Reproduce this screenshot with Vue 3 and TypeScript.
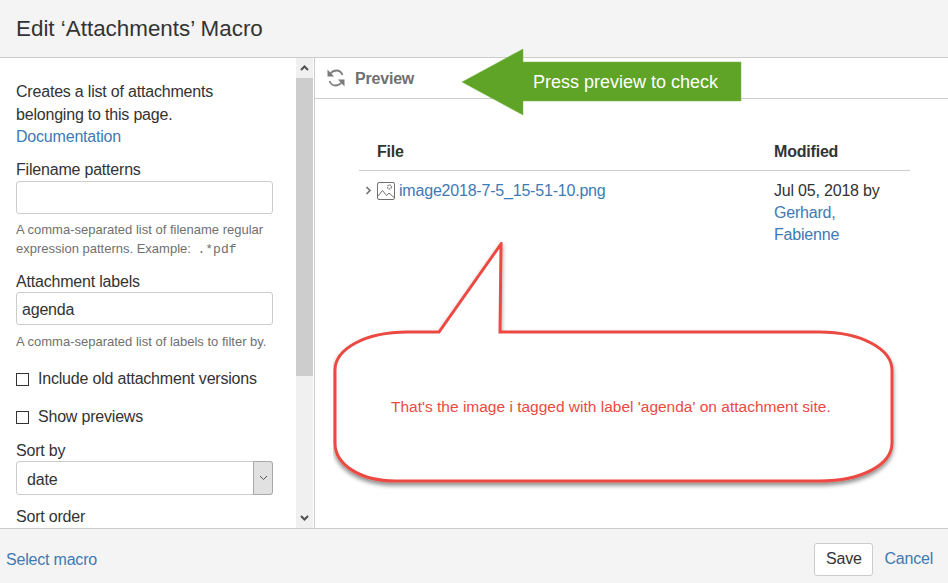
<template>
  <div class="dialog">
    <header class="dialog-header">
      <h2>Edit ‘Attachments’ Macro</h2>
    </header>

    <div class="dialog-body">
      <aside class="sidebar">
        <div class="form">
          <p class="intro">
            Creates a list of attachments belonging to this page.
            <a class="link" href="#">Documentation</a>
          </p>

          <label class="field-label first">Filename patterns</label>
          <div class="text-input"></div>
          <p class="hint">
            A comma-separated list of filename regular expression patterns. Example:
            <code>.*pdf</code>
          </p>

          <label class="field-label second">Attachment labels</label>
          <div class="text-input">agenda</div>
          <p class="hint low">A comma-separated list of labels to filter by.</p>

          <div v-for="option in checkboxes" :key="option" class="check-row">
            <span class="checkbox"></span>
            <span>{{ option }}</span>
          </div>

          <label class="field-label sort">Sort by</label>
          <div class="select">
            <span class="select-value">date</span>
            <span class="select-btn">
              <svg width="9" height="6" viewBox="0 0 9 6">
                <path d="M1 1l3.5 3.5L8 1" fill="none" stroke="#555" stroke-width="1" />
              </svg>
            </span>
          </div>

          <label class="field-label order">Sort order</label>
        </div>

        <div class="scrollbar">
          <span class="scroll-btn">
            <svg width="9" height="6" viewBox="0 0 9 6">
              <path d="M1 5l3.5-3.5L8 5" fill="none" stroke="#505050" stroke-width="2" />
            </svg>
          </span>
          <div class="scroll-thumb"></div>
          <span class="scroll-btn bottom">
            <svg width="9" height="6" viewBox="0 0 9 6">
              <path d="M1 1l3.5 3.5L8 1" fill="none" stroke="#505050" stroke-width="2" />
            </svg>
          </span>
        </div>
      </aside>

      <main class="preview">
        <div class="preview-bar">
          <svg class="refresh" width="18" height="18" viewBox="0 0 18 18">
            <path d="M0.500 0.500V7.500H7z" fill="#7a7a7a" />
            <path d="M3.500 4.500C5 2.500 7 1.500 9.500 1.500C12.500 1.500 14.500 3.500 15.500 6" fill="none" stroke="#808080" stroke-width="1.800" />
            <path d="M17.500 17.500V10.500H11z" fill="#7a7a7a" />
            <path d="M14.500 13.500C13 15.500 11 16.500 8.500 16.500C5.500 16.500 3.500 14.500 2.500 12" fill="none" stroke="#808080" stroke-width="1.800" />
          </svg>
          <span class="preview-title">Preview</span>
        </div>

        <table class="files">
          <thead>
            <tr>
              <th class="col-file">File</th>
              <th class="col-modified">Modified</th>
            </tr>
          </thead>
          <tbody>
            <tr>
              <td class="col-file">
                <div class="file-cell">
                  <svg class="twisty" width="7" height="9" viewBox="0 0 7 9">
                    <path d="M1.500 1l3.500 3.500L1.500 8" fill="none" stroke="#707070" stroke-width="1.600" />
                  </svg>
                  <svg class="file-icon" width="18" height="18" viewBox="0 0 18 18">
                    <rect x="0.500" y="0.500" width="17" height="17" rx="1.500" fill="#fff" stroke="#707070" />
                    <path d="M1 14l4.500-5.500 4 5 2.500-2.500 5 4.500" fill="none" stroke="#707070" />
                    <circle cx="12.500" cy="5" r="2" fill="none" stroke="#8a8a8a" stroke-width="1.400" stroke-dasharray="1.500 0.600" />
                  </svg>
                  <a class="link" href="#">{{ fileName }}</a>
                </div>
              </td>
              <td class="col-modified">
                Jul 05, 2018 by
                <a class="link block" href="#">Gerhard,</a>
                <a class="link block" href="#">Fabienne</a>
              </td>
            </tr>
          </tbody>
        </table>
      </main>
    </div>

    <footer class="dialog-footer">
      <a class="link" href="#">Select macro</a>
      <div class="actions">
        <button class="save" type="button">Save</button>
        <a class="link" href="#">Cancel</a>
      </div>
    </footer>

    <!-- annotations drawn on top of the screenshot -->
    <div class="note-arrow">
      <svg width="281" height="68" viewBox="0 0 281 68">
        <path d="M1 34L62 1V14H280V53H62V67z" fill="#5fa327" stroke="#7cb64c" stroke-width="0.500" />
      </svg>
      <span class="note-arrow-text">Press preview to check</span>
    </div>

    <div class="note-bubble">
      <svg width="570" height="250" viewBox="0 0 570 250">
        <defs>
          <filter id="bubble-shadow" x="-5%" y="-5%" width="110%" height="115%">
            <feDropShadow dx="0" dy="3" stdDeviation="2" flood-color="#000" flood-opacity="0.45" />
          </filter>
        </defs>
        <path
          d="M75 90H106L168 2L167 90H486C530 90 559 108 559 128V201C559 222 530 239 486 239H63C26 239 2 222 2 201V128C2 108 30 90 75 90Z"
          fill="#fff"
          stroke="#ec4a43"
          stroke-width="3"
          filter="url(#bubble-shadow)"
        />
      </svg>
      <span class="note-bubble-text">That's the image i tagged with label 'agenda' on attachment site.</span>
    </div>
  </div>
</template>

<script setup lang="ts">
const fileName = 'image2018-7-5_15-51-10.png'
const checkboxes: string[] = ['Include old attachment versions', 'Show previews']
</script>

<style scoped>
.dialog {
  position: relative;
  display: flex;
  flex-direction: column;
  width: 948px;
  height: 583px;
  overflow: hidden;
  background: #fff;
  color: #333;
  font-family: "Liberation Sans", Arial, sans-serif;
  font-size: 16px;
  letter-spacing: -0.200px;
  line-height: 20px;
}

.dialog-header {
  flex: none;
  height: 57px;
  padding: 0 16px;
  display: flex;
  align-items: center;
  background: #f4f4f4;
  border-bottom: 1px solid #ccc;
}

.dialog-header h2 {
  margin: 0;
  font-size: 22.400px;
  font-weight: 400;
  letter-spacing: 0;
  line-height: 28px;
}

.dialog-body {
  flex: 1;
  min-height: 0;
  display: flex;
}

.sidebar {
  flex: none;
  width: 315px;
  display: flex;
  border-right: 1px solid #ccc;
  box-sizing: border-box;
}

.form {
  flex: none;
  width: 296px;
  box-sizing: border-box;
  padding: 23px 23px 0 16px;
  overflow: hidden;
}

.intro {
  margin: 0;
  line-height: 22.500px;
}

.link {
  color: #4079b3;
  text-decoration: none;
}

.intro .link {
  display: block;
}

.field-label {
  display: block;
  line-height: 20px;
}

.field-label.first {
  margin-top: 11.500px;
  margin-bottom: 1px;
}

.field-label.second {
  margin-top: 13px;
  margin-bottom: 0;
}

.field-label.sort {
  margin-top: 14px;
  margin-bottom: 0;
}

.field-label.order {
  margin-top: 12px;
}

.text-input {
  box-sizing: border-box;
  width: 257px;
  height: 33px;
  padding: 0 5px;
  line-height: 33px;
  background: #fff;
  border: 1px solid #ccc;
  border-radius: 3px;
}

.hint {
  margin: 6px 0 0;
  color: #707070;
  font-size: 13px;
  letter-spacing: 0;
  line-height: 19px;
}

.hint.low {
  margin-top: 7px;
}

.hint code {
  margin-left: 3px;
  font-family: "Liberation Mono", monospace;
  font-size: 13px;
}

.check-row {
  display: flex;
  align-items: center;
  gap: 9px;
  height: 20px;
}

.hint + .check-row {
  margin-top: 18px;
}

.check-row + .check-row {
  margin-top: 18px;
}

.checkbox {
  flex: none;
  box-sizing: border-box;
  width: 13px;
  height: 13px;
  border: 1px solid #333;
}

.select {
  box-sizing: border-box;
  display: flex;
  width: 257px;
  height: 34px;
  background: #fff;
  border: 1px solid #ccc;
  border-radius: 3px;
}

.select-value {
  flex: 1;
  padding-left: 10px;
  line-height: 35px;
}

.select-btn {
  flex: none;
  width: 18px;
  display: flex;
  align-items: center;
  justify-content: center;
  background: #e1e1e1;
  border: 1px solid #a8a8a8;
  margin: -1px;
  border-radius: 0 3px 3px 0;
}

.scrollbar {
  position: relative;
  flex: none;
  width: 17px;
  background: #f0f0f0;
  display: flex;
  flex-direction: column;
}

.scroll-btn {
  flex: none;
  height: 20px;
  display: flex;
  align-items: center;
  justify-content: center;
}

.scroll-thumb {
  flex: none;
  height: 298px;
  background: #cdcdcd;
}

.scroll-btn.bottom {
  margin-top: auto;
}

.preview {
  flex: 1;
  min-width: 0;
}

.preview-bar {
  box-sizing: border-box;
  height: 41px;
  display: flex;
  align-items: center;
  padding: 0 0 0 12px;
  border-bottom: 1px solid #ccc;
}

.refresh {
  flex: none;
  margin-right: 10px;
}

.preview-title {
  padding-top: 1px;
  color: #707070;
  font-weight: 700;
}

.files {
  margin: 31px 0 0 44px;
  width: 551px;
  border-collapse: collapse;
}

.files th {
  height: 40px;
  padding: 0 0 8px;
  box-sizing: border-box;
  text-align: left;
  font-weight: 700;
  border-bottom: 1px solid #ccc;
  vertical-align: bottom;
}

.files th.col-file {
  padding-left: 18px;
}

.col-modified {
  width: 136px;
}

.files td {
  padding: 9px 0 0;
  vertical-align: top;
  line-height: 22px;
}

.file-cell {
  display: flex;
  align-items: center;
  padding-left: 6px;
}

.twisty {
  flex: none;
  margin-right: 5px;
}

.file-icon {
  flex: none;
  margin-right: 4px;
}

.block {
  display: block;
}

.dialog-footer {
  flex: none;
  box-sizing: border-box;
  height: 55px;
  padding: 6px 15px 0 6px;
  display: flex;
  align-items: center;
  justify-content: space-between;
  background: #f4f4f4;
  border-top: 1px solid #ccc;
}

.dialog-footer > .link {
  padding-top: 1px;
}

.actions {
  display: flex;
  align-items: center;
  gap: 11px;
}

.save {
  box-sizing: border-box;
  width: 59px;
  height: 33px;
  padding: 0;
  background: #fff;
  border: 1px solid #ccc;
  border-radius: 3px;
  color: #333;
  font: inherit;
  letter-spacing: inherit;
}

.note-arrow {
  position: absolute;
  left: 461px;
  top: 48px;
  width: 281px;
  height: 68px;
}

.note-arrow svg,
.note-bubble svg {
  display: block;
}

.note-arrow-text {
  position: absolute;
  left: 72px;
  top: 23px;
  color: #fff;
  font-size: 18px;
  letter-spacing: 0;
  line-height: 22px;
  white-space: nowrap;
}

.note-bubble {
  position: absolute;
  left: 333px;
  top: 242px;
  width: 570px;
  height: 250px;
}

.note-bubble-text {
  position: absolute;
  left: 58px;
  top: 155px;
  color: #ec4a43;
  font-size: 15.500px;
  letter-spacing: 0;
  line-height: 20px;
  white-space: nowrap;
}
</style>

<style>
html,
body {
  margin: 0;
  background: #fff;
}
</style>
